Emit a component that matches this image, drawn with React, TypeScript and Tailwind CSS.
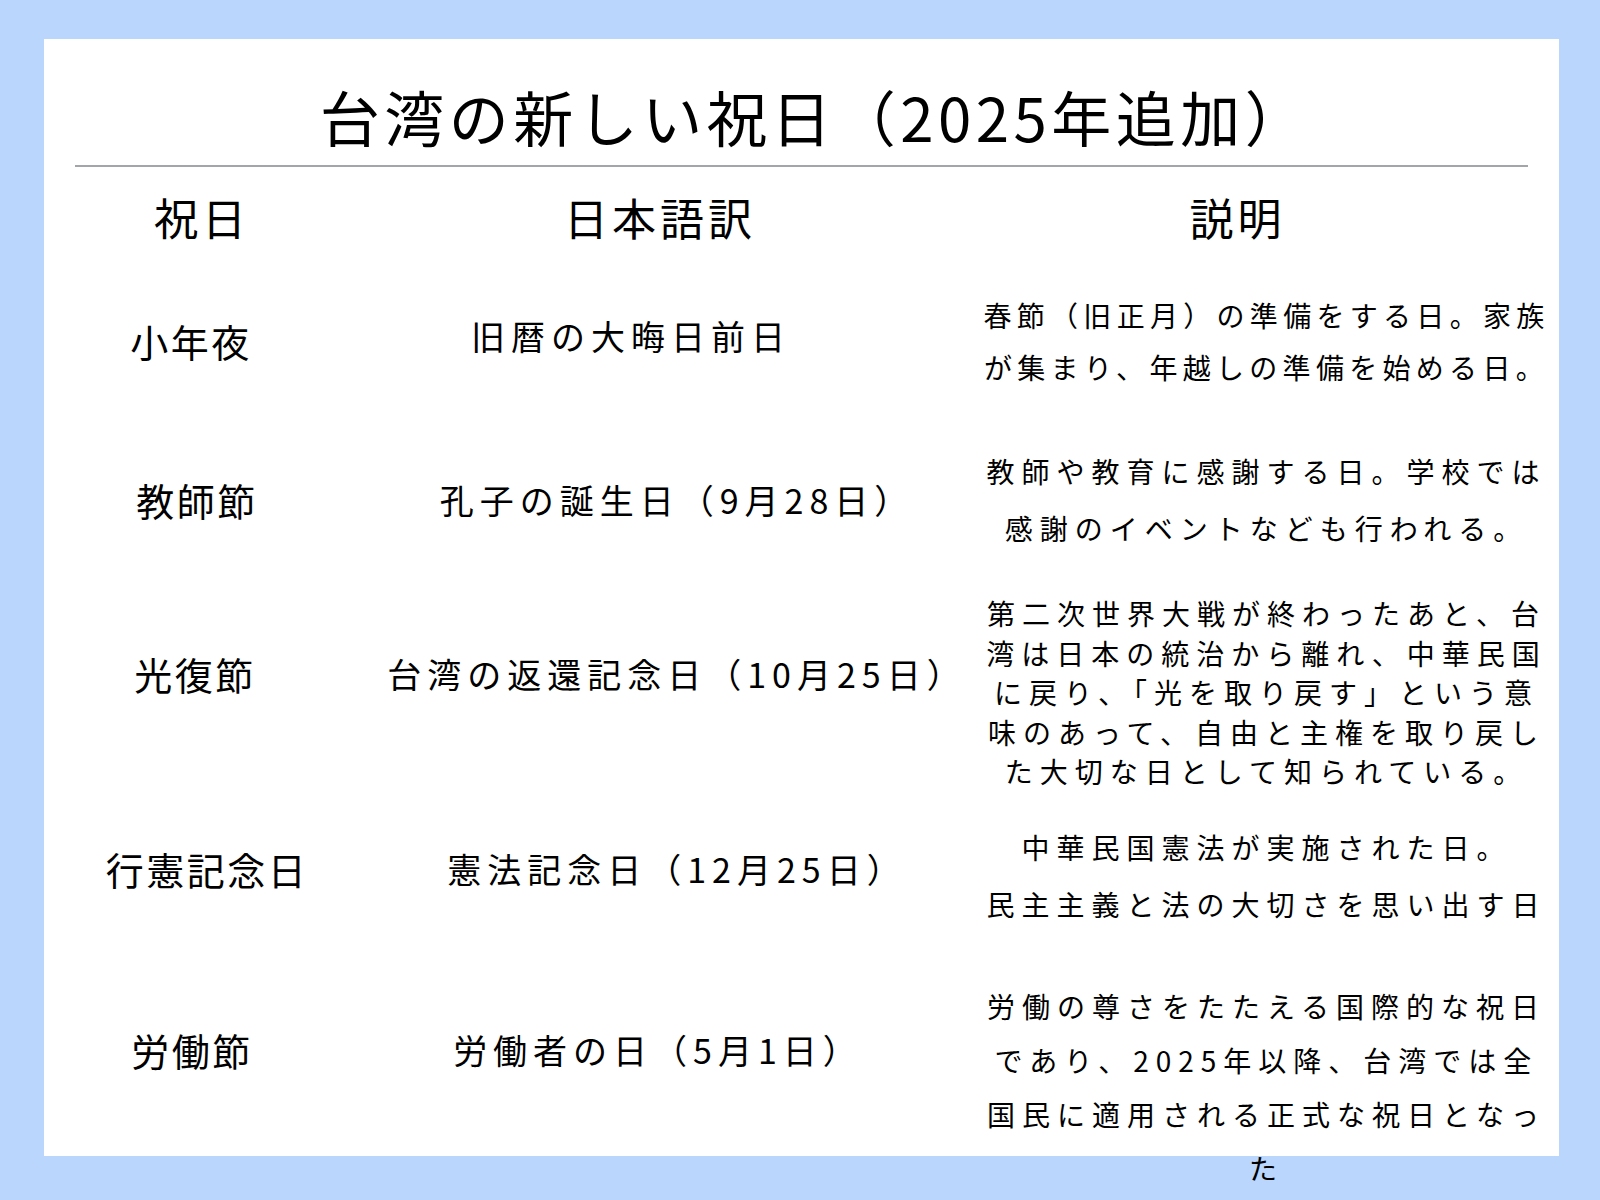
import React from 'react';

const font = { fontFamily: '"Noto Sans CJK JP", "Noto Sans", sans-serif' };

type Row = {
  name: string;
  ja: string;
  desc: string[];
  h: string;
  namePad: string;
  jaPad: string;
  descCls: string;
};

const rows: Row[] = [
  {
    name: '小年夜',
    ja: '旧暦の大晦日前日',
    desc: ['春節（旧正月）の準備をする日。家族', 'が集まり、年越しの準備を始める日。'],
    h: 'h-[148px]',
    namePad: 'pr-[8px]',
    jaPad: 'pr-[58px] pb-[10px]',
    descCls: 'leading-[52px] tracking-[5.3px]',
  },
  {
    name: '教師節',
    ja: '孔子の誕生日（9月28日）',
    desc: ['教師や教育に感謝する日。学校では', '感謝のイベントなども行われる。'],
    h: 'h-[170px]',
    namePad: 'pl-[4px]',
    jaPad: 'pl-[34px]',
    descCls: 'leading-[57px] tracking-[7px]',
  },
  {
    name: '光復節',
    ja: '台湾の返還記念日（10月25日）',
    desc: [
      '第二次世界大戦が終わったあと、台',
      '湾は日本の統治から離れ、中華民国',
      'に戻り、「光を取り戻す」という意',
      '味のあって、自由と主権を取り戻し',
      'た大切な日として知られている。',
    ],
    h: 'h-[178px]',
    namePad: '',
    jaPad: 'pl-[34px]',
    descCls: 'leading-[39.5px] tracking-[7px] pt-[38px]',
  },
  {
    name: '行憲記念日',
    ja: '憲法記念日（12月25日）',
    desc: ['中華民国憲法が実施された日。', '民主主義と法の大切さを思い出す日'],
    h: 'h-[212px]',
    namePad: 'pl-[24px]',
    jaPad: 'pl-[34px]',
    descCls: 'leading-[57px] tracking-[7px] pt-[14px]',
  },
  {
    name: '労働節',
    ja: '労働者の日（5月1日）',
    desc: [
      '労働の尊さをたたえる国際的な祝日',
      'であり、2025年以降、台湾では全',
      '国民に適用される正式な祝日となっ',
      'た',
    ],
    h: 'h-[150px]',
    namePad: 'pr-[6px]',
    jaPad: 'pr-[4px]',
    descCls: 'leading-[54px] tracking-[7px] pt-[74px]',
  },
];

export default function App() {
  return (
    <div className="w-[1600px] h-[1200px] bg-[#bbd6fd] pt-[39px] pl-[44px] overflow-hidden text-black" style={font}>
      <div className="w-[1515px] h-[1117px] bg-white px-[31px] flex flex-col">
        <div className="h-[126px] pt-[28px] pl-[26px] flex items-center justify-center">
          <h1 className="text-[60px] leading-none tracking-[4.5px] whitespace-nowrap">台湾の新しい祝日（2025年追加）</h1>
        </div>
        <div className="h-[2px] bg-[#a2a5aa]" />

        <div className="grid grid-cols-[240px_690px_1fr] grid-rows-1 h-[100px] text-[44px] leading-none">
          <div className="flex items-center justify-center pl-[14px] tracking-[4px]">祝日</div>
          <div className="flex items-center justify-center tracking-[4px]">日本語訳</div>
          <div className="flex items-center justify-center pr-[58px] tracking-[4px]">説明</div>
        </div>

        {rows.map((r) => (
          <div key={r.name} className={`grid grid-cols-[240px_690px_1fr] grid-rows-1 ${r.h}`}>
            <div className={`flex items-center justify-center text-[38px] leading-none tracking-[2.5px] whitespace-nowrap ${r.namePad}`}>
              {r.name}
            </div>
            <div className={`flex items-center justify-center text-[34px] leading-none tracking-[6px] whitespace-nowrap ${r.jaPad}`}>
              {r.ja}
            </div>
            <div className={`-mx-[60px] flex flex-col items-center justify-center text-[28px] ${r.descCls}`}>
              {r.desc.map((line) => (
                <div key={line} className="whitespace-nowrap">
                  {line}
                </div>
              ))}
            </div>
          </div>
        ))}
      </div>
    </div>
  );
}
